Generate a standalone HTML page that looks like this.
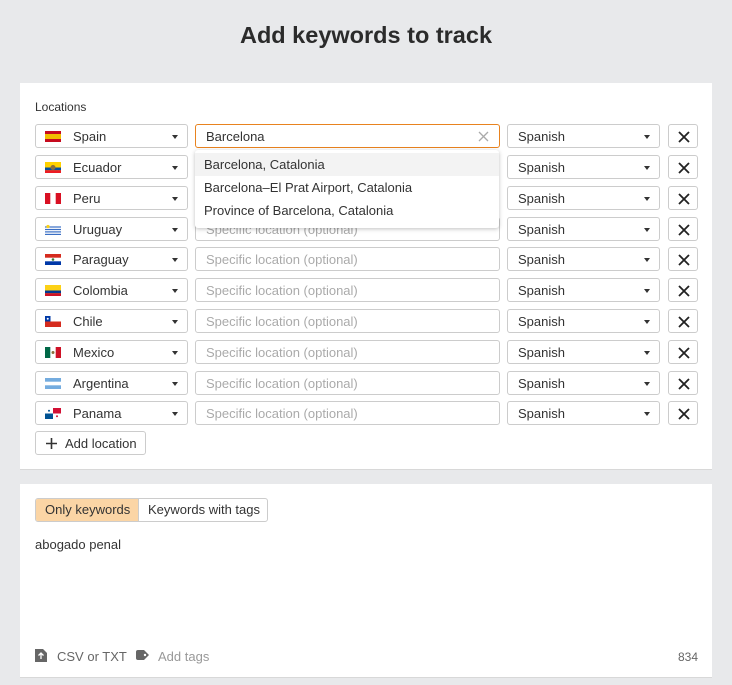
<!DOCTYPE html>
<html><head><meta charset="utf-8"><style>
*{box-sizing:border-box;margin:0;padding:0}
body{width:732px;height:685px;background:#e8e9eb;font-family:"Liberation Sans",Arial,sans-serif;color:#333;position:relative;overflow:hidden;font-size:13px}
h1{position:absolute;left:0;width:732px;top:22px;text-align:center;font-size:23.5px;font-weight:bold;color:#2b2b2b}
.card{position:absolute;left:20px;width:692px;background:#fff;border-bottom:1px solid #d8d8d8}
.box{position:absolute;height:24px;border:1px solid #ccc;border-radius:3px;background:#fff;line-height:23px}
.cs{left:35px;width:153px}
.cs svg{position:absolute;left:9px;top:6px}
.cs span{position:absolute;left:37px}
.caret{position:absolute;right:9px;top:10px;width:0;height:0;border-left:3.5px solid transparent;border-right:3.5px solid transparent;border-top:4px solid #333}
.loc{left:195px;width:305px;padding-left:10px;color:#aaa}
.lang{left:507px;width:153px;padding-left:10px}
.x{left:668px;width:30px}
.x svg{position:absolute;left:9px;top:6px}
.dd{position:absolute;left:195px;top:150px;width:304px;height:78px;background:#fff;border-radius:3px;box-shadow:0 1px 4px rgba(0,0,0,.25);z-index:5}
.dd div{height:23px;line-height:23px;padding-left:9px;color:#333}
</style></head><body>
<h1>Add keywords to track</h1>
<div class="card" style="top:83px;height:387px"></div>
<div class="card" style="top:484px;height:194px"></div>
<div style="position:absolute;left:35px;top:100px;font-size:12px">Locations</div>

<div class="box cs" style="top:124px"><svg width="16" height="11"><rect width="16" height="11" fill="#c60b1e"/><rect y="3" width="16" height="5" fill="#f1bf00"/></svg><span>Spain</span><i class="caret"></i></div>
<div class="box loc" style="top:124px;border-color:#e8831f;color:#333">Barcelona<svg style="position:absolute;right:10px;top:6px" width="11" height="11"><path d="M1 1L10 10M10 1L1 10" stroke="#aaa" stroke-width="1.3"/></svg></div>

<div class="box cs" style="top:155px"><svg width="16" height="11"><rect width="16" height="11" fill="#ffd100"/><rect y="5.5" width="16" height="2.75" fill="#034ea2"/><rect y="8.25" width="16" height="2.75" fill="#ed1c24"/><circle cx="8" cy="5.5" r="2.5" fill="#8a6d3b"/></svg><span>Ecuador</span><i class="caret"></i></div>
<div class="box cs" style="top:186px"><svg width="16" height="11"><rect width="16" height="11" fill="#d91023"/><rect x="5.3" width="5.4" height="11" fill="#fff"/></svg><span>Peru</span><i class="caret"></i></div>
<div class="box cs" style="top:217px"><svg width="16" height="11"><rect width="16" height="11" fill="#fff"/><rect y="2.4" width="16" height="1.2" fill="#3a6fc4"/><rect y="4.9" width="16" height="1.2" fill="#3a6fc4"/><rect y="7.3" width="16" height="1.2" fill="#3a6fc4"/><rect y="9.8" width="16" height="1.2" fill="#3a6fc4"/><circle cx="3" cy="2.5" r="1.6" fill="#fcd116"/></svg><span>Uruguay</span><i class="caret"></i></div>
<div class="box loc" style="top:217px">Specific location (optional)</div>
<div class="box cs" style="top:247px"><svg width="16" height="11"><rect width="16" height="11" fill="#fff"/><rect width="16" height="3.7" fill="#d52b1e"/><rect y="7.3" width="16" height="3.7" fill="#0038a8"/><circle cx="8" cy="5.5" r="1.3" fill="#3a7d3a"/></svg><span>Paraguay</span><i class="caret"></i></div>
<div class="box loc" style="top:247px">Specific location (optional)</div>
<div class="box cs" style="top:278px"><svg width="16" height="11"><rect width="16" height="11" fill="#fcd116"/><rect y="5.5" width="16" height="2.75" fill="#003893"/><rect y="8.25" width="16" height="2.75" fill="#ce1126"/></svg><span>Colombia</span><i class="caret"></i></div>
<div class="box loc" style="top:278px">Specific location (optional)</div>
<div class="box cs" style="top:309px"><svg width="16" height="11"><rect width="16" height="11" fill="#d52b1e"/><rect width="16" height="5.5" fill="#fff"/><rect width="5.5" height="5.5" fill="#0039a6"/><circle cx="2.75" cy="2.75" r="1" fill="#fff"/></svg><span>Chile</span><i class="caret"></i></div>
<div class="box loc" style="top:309px">Specific location (optional)</div>
<div class="box cs" style="top:340px"><svg width="16" height="11"><rect width="16" height="11" fill="#fff"/><rect width="5.3" height="11" fill="#006847"/><rect x="10.7" width="5.3" height="11" fill="#ce1126"/><circle cx="8" cy="5.5" r="1.5" fill="#8a6d3b"/></svg><span>Mexico</span><i class="caret"></i></div>
<div class="box loc" style="top:340px">Specific location (optional)</div>
<div class="box cs" style="top:371px"><svg width="16" height="11"><rect width="16" height="11" fill="#74acdf"/><rect y="3.7" width="16" height="3.6" fill="#fff"/></svg><span>Argentina</span><i class="caret"></i></div>
<div class="box loc" style="top:371px">Specific location (optional)</div>
<div class="box cs" style="top:401px"><svg width="16" height="11"><rect width="16" height="11" fill="#fff"/><rect x="8" width="8" height="5.5" fill="#d21034"/><rect y="5.5" width="8" height="5.5" fill="#005293"/><circle cx="4" cy="2.75" r="1" fill="#005293"/><circle cx="12" cy="8.25" r="1" fill="#d21034"/></svg><span>Panama</span><i class="caret"></i></div>
<div class="box loc" style="top:401px">Specific location (optional)</div>

<div class="box lang" style="top:124px">Spanish<i class="caret"></i></div><div class="box x" style="top:124px"><svg width="12" height="12"><path d="M1 1L11 11M11 1L1 11" stroke="#222" stroke-width="1.8"/></svg></div>
<div class="box lang" style="top:155px">Spanish<i class="caret"></i></div><div class="box x" style="top:155px"><svg width="12" height="12"><path d="M1 1L11 11M11 1L1 11" stroke="#222" stroke-width="1.8"/></svg></div>
<div class="box lang" style="top:186px">Spanish<i class="caret"></i></div><div class="box x" style="top:186px"><svg width="12" height="12"><path d="M1 1L11 11M11 1L1 11" stroke="#222" stroke-width="1.8"/></svg></div>
<div class="box lang" style="top:217px">Spanish<i class="caret"></i></div><div class="box x" style="top:217px"><svg width="12" height="12"><path d="M1 1L11 11M11 1L1 11" stroke="#222" stroke-width="1.8"/></svg></div>
<div class="box lang" style="top:247px">Spanish<i class="caret"></i></div><div class="box x" style="top:247px"><svg width="12" height="12"><path d="M1 1L11 11M11 1L1 11" stroke="#222" stroke-width="1.8"/></svg></div>
<div class="box lang" style="top:278px">Spanish<i class="caret"></i></div><div class="box x" style="top:278px"><svg width="12" height="12"><path d="M1 1L11 11M11 1L1 11" stroke="#222" stroke-width="1.8"/></svg></div>
<div class="box lang" style="top:309px">Spanish<i class="caret"></i></div><div class="box x" style="top:309px"><svg width="12" height="12"><path d="M1 1L11 11M11 1L1 11" stroke="#222" stroke-width="1.8"/></svg></div>
<div class="box lang" style="top:340px">Spanish<i class="caret"></i></div><div class="box x" style="top:340px"><svg width="12" height="12"><path d="M1 1L11 11M11 1L1 11" stroke="#222" stroke-width="1.8"/></svg></div>
<div class="box lang" style="top:371px">Spanish<i class="caret"></i></div><div class="box x" style="top:371px"><svg width="12" height="12"><path d="M1 1L11 11M11 1L1 11" stroke="#222" stroke-width="1.8"/></svg></div>
<div class="box lang" style="top:401px">Spanish<i class="caret"></i></div><div class="box x" style="top:401px"><svg width="12" height="12"><path d="M1 1L11 11M11 1L1 11" stroke="#222" stroke-width="1.8"/></svg></div>

<div class="dd"><div style="background:#f3f3f3;margin-top:3px">Barcelona, Catalonia</div><div>Barcelona–El Prat Airport, Catalonia</div><div>Province of Barcelona, Catalonia</div></div>

<div class="box" style="left:35px;top:431px;width:111px;padding-left:29px">Add location<svg style="position:absolute;left:10px;top:6px" width="11" height="11"><path d="M5.5 0V11M0 5.5H11" stroke="#333" stroke-width="1.6"/></svg></div>

<div style="position:absolute;left:35px;top:498px;height:24px;width:233px;border:1px solid #ccc;border-radius:3px;line-height:22px;overflow:hidden">
<span style="position:absolute;left:0;top:0;width:103px;height:22px;background:#fbd5a5;padding-left:9px;border-right:1px solid #ccc">Only keywords</span>
<span style="position:absolute;left:112px;top:0">Keywords with tags</span></div>
<div style="position:absolute;left:35px;top:537px">abogado penal</div>

<svg style="position:absolute;left:35px;top:649px" width="12" height="13"><path d="M0 0H8L12 4V13H0Z" fill="#666"/><path d="M6 4V10M3.5 6.5L6 4L8.5 6.5" stroke="#fff" stroke-width="1.3" fill="none"/></svg>
<div style="position:absolute;left:57px;top:649px;color:#666">CSV or TXT</div>
<svg style="position:absolute;left:136px;top:650px" width="13" height="10"><path d="M0 2Q0 0 2 0H8L13 5L8 10H2Q0 10 0 8Z" fill="#666"/><circle cx="9" cy="5" r="1.2" fill="#fff"/></svg>
<div style="position:absolute;left:158px;top:649px;color:#999">Add tags</div>
<div style="position:absolute;left:678px;top:650px;color:#666;font-size:12px">834</div>
</body></html>
